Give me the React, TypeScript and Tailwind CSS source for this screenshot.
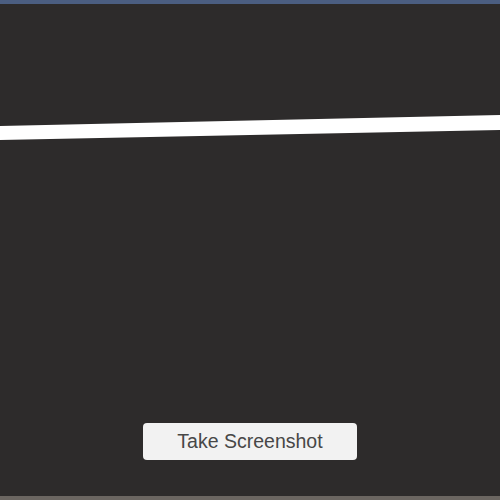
export default function App() {
  return (
    <div className="flex h-[500px] w-[500px] flex-col bg-[#2d2b2b]" style={{ fontFamily: '"Liberation Sans", Arial, sans-serif' }}>
      {/* title strip */}
      <div className="h-[4px] bg-[#4b5e81]" />
      <div className="relative flex flex-1 flex-col items-center justify-end pb-[36px]">
        {/* drawn line */}
        <svg className="absolute left-0 top-0" width="500" height="200" viewBox="0 0 500 200">
          <polygon points="0,122 500,111 500,126 0,136" fill="#ffffff" />
        </svg>
        <button className="h-[37px] w-[214px] rounded-[4px] bg-[#f2f2f2] pt-[1px] text-[19.5px] leading-none text-[#474747]">
          Take Screenshot
        </button>
      </div>
      <div className="h-[4px] bg-[#6b6661]" />
    </div>
  )
}
